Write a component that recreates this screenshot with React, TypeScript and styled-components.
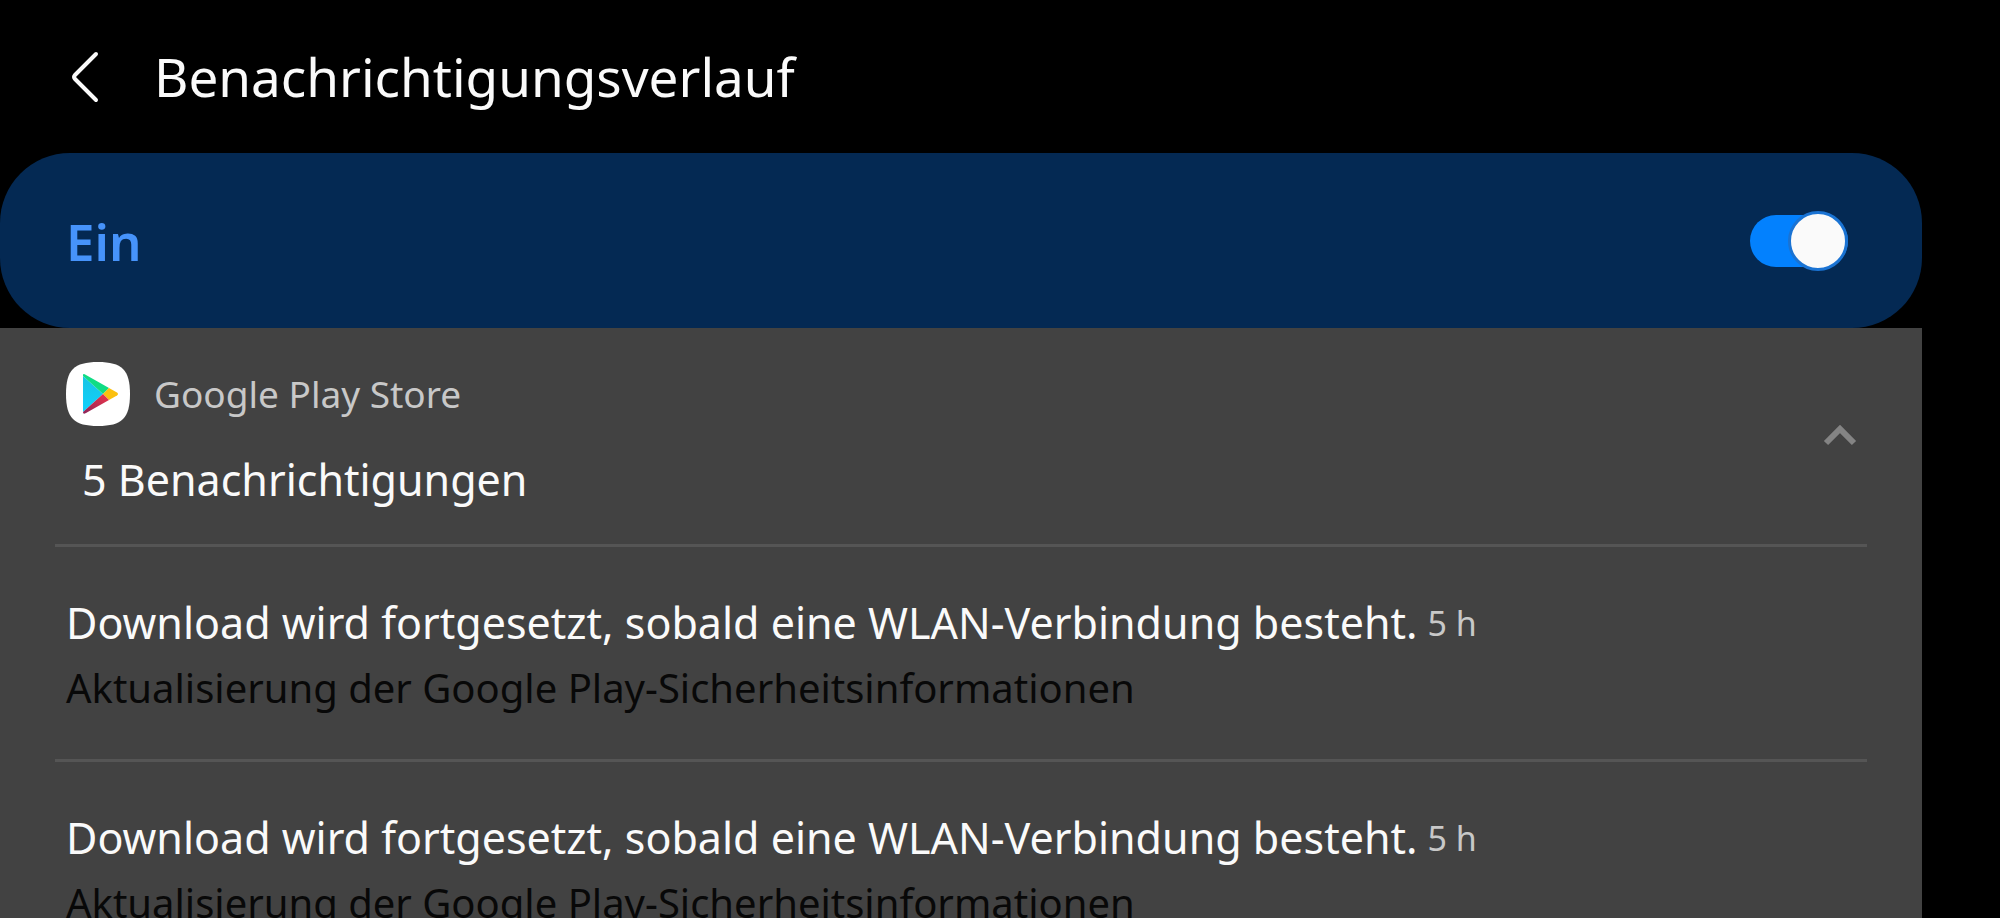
import React, { useState } from "react";
import styled, { createGlobalStyle } from "styled-components";

const GlobalStyle = createGlobalStyle`
  *, *::before, *::after { box-sizing: border-box; }
  body {
    margin: 0;
    background: #000;
    color: #fafafa;
    font-family: "Noto Sans", "Open Sans", sans-serif;
  }
  h1, h2, h3, p, ul { margin: 0; padding: 0; font-weight: 400; }
  button { border: 0; padding: 0; background: none; color: inherit; font: inherit; cursor: pointer; }
`;

const Screen = styled.div`
  height: 100vh;
  display: flex;
  flex-direction: column;
  padding-right: 78px;
  overflow: hidden;
`;

const TopBar = styled.header`
  flex: none;
  display: flex;
  align-items: center;
  gap: 52px;
  height: 153px;
  padding-left: 66px;
`;

const BackButton = styled.button`
  display: flex;
  width: 36px;
  height: 56px;
`;

const Title = styled.h1`
  font-size: 53px;
  line-height: 72px;
`;

const SwitchBar = styled.label`
  flex: none;
  display: flex;
  align-items: center;
  justify-content: space-between;
  height: 175px;
  padding: 0 74px 0 66px;
  border-radius: 70px;
  background: #042953;
  cursor: pointer;
`;

const SwitchLabel = styled.span`
  color: #4693fb;
  font-size: 51px;
  font-weight: 600;
  line-height: 68px;
`;

const Toggle = styled.input`
  appearance: none;
  display: flex;
  align-items: center;
  width: 98px;
  height: 52px;
  margin: 0;
  border-radius: 26px;
  background: #6b7683;
  cursor: pointer;

  &::before {
    content: "";
    flex: none;
    width: 60px;
    height: 60px;
    border: 3px solid #6b7683;
    border-radius: 50%;
    background: #fafafa;
  }
  &:checked { background: #0381fe; justify-content: flex-end; }
  &:checked::before { border-color: #1a73d3; }
`;

const Panel = styled.main`
  flex: 1;
  min-height: 0;
  overflow-y: auto;
  scrollbar-width: none;
  padding: 0 55px;
  background: #424242;
`;

const GroupHeader = styled.section`
  display: flex;
  align-items: center;
  justify-content: space-between;
  height: 216px;
  padding: 0 9px 0 11px;
`;

const AppRow = styled.div`
  display: flex;
  align-items: center;
  gap: 24px;
`;

const AppName = styled.h2`
  color: #c8c8c8;
  font-size: 37px;
  line-height: 64px;
`;

const Count = styled.p`
  padding: 24px 0 0 16px;
  font-size: 43px;
  line-height: 60px;
`;

const CollapseButton = styled.button`
  display: flex;
  width: 36px;
  height: 28px;
`;

const List = styled.ul`
  list-style: none;
`;

const Item = styled.li`
  height: 215px;
  padding: 46px 11px 0;
  border-top: 3px solid #555;
`;

const ItemHead = styled.div`
  display: flex;
  align-items: center;
  gap: 10px;
`;

const ItemTitle = styled.h3`
  font-size: 43px;
  line-height: 60px;
`;

const Age = styled.time`
  color: #c8c8c8;
  font-size: 34px;
  line-height: 60px;
`;

const ItemText = styled.p`
  color: #080808;
  font-size: 40px;
  line-height: 70px;
`;

const PlayStoreIcon = () => (
  <svg width="64" height="64" viewBox="0 0 64 64" aria-hidden="true">
    <defs>
      <linearGradient id="blue" x1="0" y1="0" x2="0" y2="1">
        <stop offset="0" stopColor="#18c4e4" />
        <stop offset="1" stopColor="#10d0fc" />
      </linearGradient>
      <linearGradient id="red" x1="1" y1="0" x2="0" y2="1">
        <stop offset="0" stopColor="#f0364a" />
        <stop offset="1" stopColor="#8c2458" />
      </linearGradient>
    </defs>
    <path d="M32 0C56 0 64 8 64 32S56 64 32 64 0 56 0 32 8 0 32 0Z" fill="#fff" />
    <path d="M17 14V50L37 32Z" fill="url(#blue)" />
    <path d="M17 13Q17 11 20 13L43 26L37 32L17 14Z" fill="#10dc84" />
    <path d="M43 26L51 30.500Q53 32 51 33.500L43 38L37 32Z" fill="#fbc010" />
    <path d="M43 38L20 51Q17 53 17 50L37 32Z" fill="url(#red)" />
  </svg>
);

const notifications = [
  {
    id: 1,
    title: "Download wird fortgesetzt, sobald eine WLAN-Verbindung besteht.",
    text: "Aktualisierung der Google Play-Sicherheitsinformationen",
    age: "5 h",
  },
  {
    id: 2,
    title: "Download wird fortgesetzt, sobald eine WLAN-Verbindung besteht.",
    text: "Aktualisierung der Google Play-Sicherheitsinformationen",
    age: "5 h",
  },
];

export default function App() {
  const [enabled, setEnabled] = useState(true);
  const [open, setOpen] = useState(true);

  return (
    <>
      <GlobalStyle />
      <Screen>
        <TopBar>
          <BackButton type="button" aria-label="Zurück">
            <svg width="36" height="56" viewBox="0 0 36 56" fill="none" stroke="#fafafa" strokeWidth="4" strokeLinecap="round" strokeLinejoin="round">
              <path d="M30 5L9 26Q7 28 9 30L30 51" />
            </svg>
          </BackButton>
          <Title>Benachrichtigungsverlauf</Title>
        </TopBar>
        <SwitchBar htmlFor="history-switch">
          <SwitchLabel>{enabled ? "Ein" : "Aus"}</SwitchLabel>
          <Toggle
            id="history-switch"
            type="checkbox"
            role="switch"
            checked={enabled}
            onChange={(e) => setEnabled(e.target.checked)}
          />
        </SwitchBar>
        <Panel>
          <GroupHeader>
            <div>
              <AppRow>
                <PlayStoreIcon />
                <AppName>Google Play Store</AppName>
              </AppRow>
              <Count>5 Benachrichtigungen</Count>
            </div>
            <CollapseButton type="button" aria-label="Einklappen" aria-expanded={open} onClick={() => setOpen(!open)}>
              <svg width="36" height="28" viewBox="0 0 36 28" fill="none" stroke="#848484" strokeWidth="6">
                <path d={open ? "M4 21L18 7L32 21" : "M4 7L18 21L32 7"} />
              </svg>
            </CollapseButton>
          </GroupHeader>
          {open && (
            <List>
              {notifications.map((n) => (
                <Item key={n.id}>
                  <ItemHead>
                    <ItemTitle>{n.title}</ItemTitle>
                    <Age>{n.age}</Age>
                  </ItemHead>
                  <ItemText>{n.text}</ItemText>
                </Item>
              ))}
            </List>
          )}
        </Panel>
      </Screen>
    </>
  );
}
